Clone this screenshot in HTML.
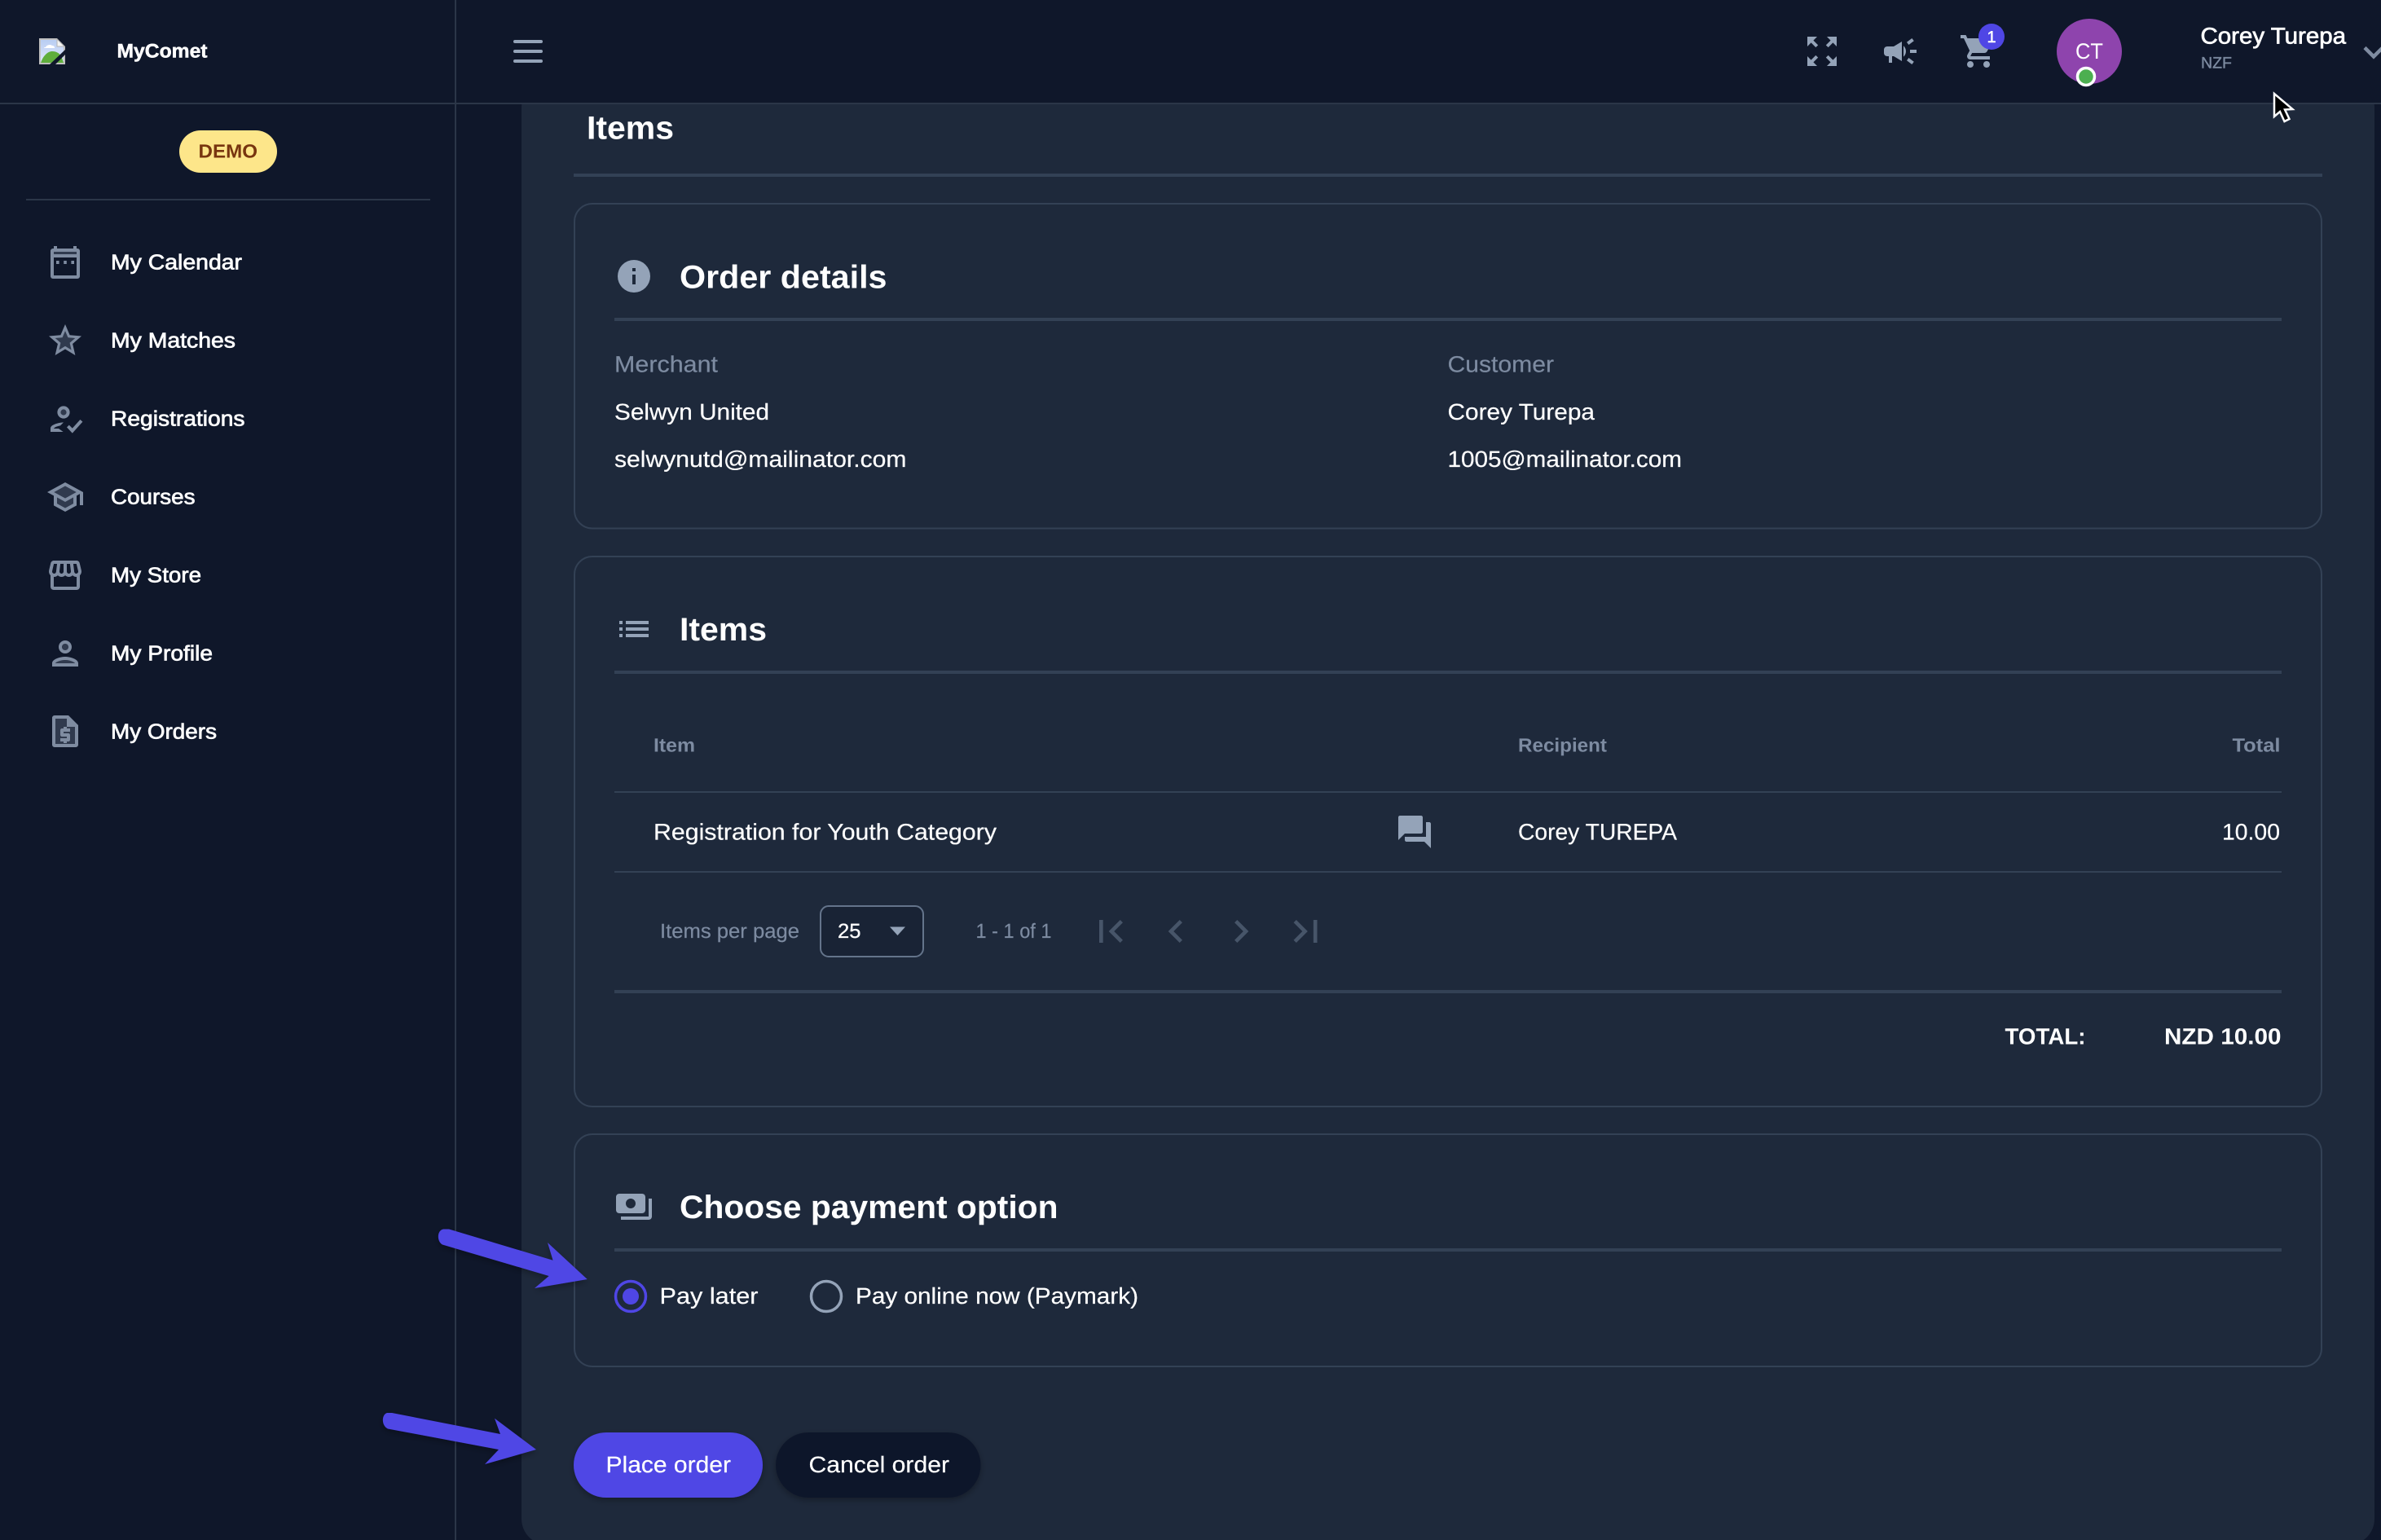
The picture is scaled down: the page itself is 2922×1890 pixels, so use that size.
<!DOCTYPE html>
<html lang="en">
<head>
<meta charset="utf-8">
<title>MyComet - Items</title>
<style>
html,body{margin:0;padding:0;background:#0f172a;width:2922px;height:1890px;overflow:hidden}
svg{display:block}
text{font-family:"Liberation Sans",sans-serif;fill:#fff;text-rendering:geometricPrecision}
.m{stroke:#fff;stroke-width:.5px}
.h{font-size:40px;font-weight:700}
.t{font-size:28px;stroke:#fff;stroke-width:.2px}
.mu{fill:#7d8ba1;stroke:#7d8ba1;stroke-width:.2px}
.n{font-size:26px;stroke:#fff;stroke-width:.7px}
.ic{fill:#7f8ca1}
.ic2{fill:#94a3b8}
.tw{opacity:.3}
.th{font-size:23.5px;font-weight:700;fill:#7d8ba1}
.l{fill:#334155}
.pg{fill:#475569}
</style>
</head>
<body>
<svg xmlns="http://www.w3.org/2000/svg" width="2922" height="1890" viewBox="0 0 2922 1890">
<defs>
<linearGradient id="sky" x1="0" y1="0" x2="0" y2="1"><stop offset="0" stop-color="#b9cdf2"/><stop offset="1" stop-color="#dfe8fb"/></linearGradient>
<filter id="sh" x="-20%" y="-20%" width="140%" height="150%"><feDropShadow dx="0" dy="3" stdDeviation="4" flood-color="#000" flood-opacity=".3"/></filter>
</defs>
<rect width="2922" height="1890" fill="#0f172a"/>
<rect x="640" y="100" width="2274" height="1796" rx="32" fill="#1e293b"/>
<rect x="558" y="0" width="2" height="1890" fill="#2b3648"/>

<!-- header -->
<rect x="0" y="0" width="2922" height="126" fill="#0f172a"/>
<rect x="558" y="0" width="2" height="126" fill="#2b3648"/>
<rect x="0" y="126" width="2922" height="2" fill="#2b3648"/>

<!-- broken image -->
<g>
<path d="M48 47h22l10 10v22H48z" fill="#c0c0c0"/>
<path d="M50 49h19l9 9v19H50z" fill="url(#sky)"/>
<path d="M70 48v9h9z" fill="#f4f4f4" stroke="#b5b5b5"/>
<path d="M56 58c1-3 6-4 8-2 2 0 3 1 3 3H54c0-1 1-1 2-1z" fill="#fff"/>
<path d="M50 77c3-9 9-14 14-14 6 0 10 3 12 8l2 6z" fill="#5fae3c"/>
<path d="M60 80 L80 61 L80 67 L67 80z" fill="#0f172a"/>
</g>
<text x="143.500" y="70.500" class="m" font-weight="700" font-size="24" textLength="111" lengthAdjust="spacingAndGlyphs">MyComet</text>

<!-- hamburger -->
<rect x="630" y="49" width="36" height="4" rx="2" fill="#94a3b8"/>
<rect x="630" y="61" width="36" height="4" rx="2" fill="#94a3b8"/>
<rect x="630" y="73" width="36" height="4" rx="2" fill="#94a3b8"/>

<!-- DEMO -->
<rect x="220" y="160" width="120" height="52" rx="26" fill="#fde68a"/>
<text x="243.500" y="193.500" font-size="23.500" font-weight="700" style="fill:#78350f" textLength="72.500" lengthAdjust="spacingAndGlyphs">DEMO</text>
<rect x="32" y="244" width="496" height="2" fill="#2b3648"/>

<!-- nav -->
<text x="136" y="330.700" class="n" textLength="161" lengthAdjust="spacingAndGlyphs">My Calendar</text>
<text x="136" y="426.700" class="n" textLength="153" lengthAdjust="spacingAndGlyphs">My Matches</text>
<text x="136" y="522.700" class="n" textLength="164.500" lengthAdjust="spacingAndGlyphs">Registrations</text>
<text x="136" y="618.700" class="n" textLength="103.500" lengthAdjust="spacingAndGlyphs">Courses</text>
<text x="136" y="714.700" class="n" textLength="111" lengthAdjust="spacingAndGlyphs">My Store</text>
<text x="136" y="810.700" class="n" textLength="125" lengthAdjust="spacingAndGlyphs">My Profile</text>
<text x="136" y="906.700" class="n" textLength="130" lengthAdjust="spacingAndGlyphs">My Orders</text>

<!-- calendar -->
<g transform="translate(56 298) scale(2)" class="ic">
<rect class="tw" x="4" y="5" width="16" height="3"/>
<path fill-rule="evenodd" d="M5 2h2v1.500h10V2h2v1.500h0.500c.8 0 1.500.7 1.500 1.500v15.500c0 .8-.7 1.500-1.500 1.500h-15c-.8 0-1.500-.7-1.500-1.500V5c0-.8.7-1.500 1.500-1.500H5zM5 9v11h14V9zM5 5.500V7h14V5.500z"/>
<rect x="6.500" y="11" width="1.800" height="2"/><rect x="11.100" y="11" width="1.800" height="2"/><rect x="15.700" y="11" width="1.800" height="2"/>
</g>
<!-- star -->
<g transform="translate(56 394) scale(2)" class="ic">
<path class="tw" d="M12 15.400l-3.760 2.270 1-4.280-3.320-2.880 4.380-.38L12 6.100l1.710 4.040 4.380.38-3.320 2.880 1 4.280z"/>
<path d="M22 9.240l-7.190-.62L12 2 9.190 8.630 2 9.240l5.460 4.730L5.820 21 12 17.270 18.180 21l-1.630-7.030L22 9.240zM12 15.400l-3.760 2.270 1-4.280-3.320-2.880 4.380-.38L12 6.100l1.710 4.040 4.380.38-3.320 2.880 1 4.280z"/>
</g>
<!-- how to reg -->
<g transform="translate(56 490) scale(2)" class="ic">
<circle cx="11" cy="8" r="2" class="tw"/>
<path fill-rule="evenodd" d="M11 4.200a3.800 3.800 0 1 1 0 7.600 3.800 3.800 0 0 1 0-7.600zm0 2a1.800 1.800 0 1 0 0 3.600 1.800 1.800 0 0 0 0-3.600z"/>
<path d="M3 20v-2.200c0-1.900 4-3.400 8-3.600l-2 2c-1.800.3-3.600 1-4 1.800h3l2.800 2z"/>
<path d="M13 17.200l1.400-1.400 2 2 4.800-5.300 1.500 1.300-6.300 7z"/>
</g>
<!-- school -->
<g transform="translate(56 586) scale(2)" class="ic">
<path class="tw" d="M7 12.270v3.720l5 2.730 5-2.730v-3.720L12 15zM5.180 9L12 12.720 18.820 9 12 5.280z"/>
<path d="M12 3L1 9l4 2.180v6L12 21l7-3.820v-6l2-1.090V17h2V9L12 3zm6.820 6L12 12.720 5.180 9 12 5.280 18.820 9zM17 15.990l-5 2.730-5-2.730v-3.720L12 15l5-2.730v3.720z"/>
</g>
<!-- store -->
<g transform="translate(56 682) scale(2)" class="ic">
<path d="M21.900 8.890l-1.050-4.370c-.22-.9-1-1.520-1.910-1.520H5.050c-.9 0-1.690.63-1.900 1.520L2.100 8.890c-.24 1.020-.02 2.060.62 2.880.08.11.19.19.28.29V19c0 1.100.9 2 2 2h14c1.100 0 2-.9 2-2v-6.940c.09-.09.2-.18.28-.28.64-.82.87-1.870.62-2.890zm-2.990-3.900l1.050 4.370c.1.42.01.84-.25 1.170-.14.18-.44.47-.94.47-.61 0-1.140-.49-1.210-1.140L16.980 5l1.930-.01zM13 5h1.960l.54 4.520c.05.39-.07.78-.33 1.070-.22.26-.54.41-.95.41-.67 0-1.220-.59-1.220-1.310V5zM8.490 9.520L9.040 5H11v4.690c0 .72-.55 1.310-1.290 1.310-.34 0-.65-.15-.89-.41-.25-.29-.37-.68-.33-1.070zm-4.450-.16L5.050 5h1.970l-.58 4.860c-.08.65-.6 1.140-1.210 1.140-.49 0-.8-.29-.93-.47-.27-.32-.36-.75-.26-1.170zM5 19v-6.030c.08.01.15.03.23.03.87 0 1.660-.36 2.240-.95.6.6 1.400.95 2.310.95.87 0 1.650-.36 2.230-.93.59.57 1.390.93 2.290.93.84 0 1.640-.35 2.240-.95.58.59 1.370.95 2.240.95.08 0 .15-.02.23-.03V19H5z"/>
</g>
<!-- person -->
<g transform="translate(56 778) scale(2)" class="ic">
<path class="tw" d="M12 16c-2.690 0-5.770 1.280-6 2h12c-.2-.71-3.300-2-6-2z"/><circle class="tw" cx="12" cy="8" r="2"/>
<path d="M12 6c1.100 0 2 .9 2 2s-.9 2-2 2-2-.9-2-2 .9-2 2-2m0 10c2.700 0 5.800 1.290 6 2H6c.23-.72 3.310-2 6-2m0-12C9.790 4 8 5.790 8 8s1.790 4 4 4 4-1.790 4-4-1.790-4-4-4zm0 10c-2.670 0-8 1.340-8 4v2h16v-2c0-2.660-5.330-4-8-4z"/>
</g>
<!-- request quote -->
<g transform="translate(56 874) scale(2)" class="ic">
<path class="tw" d="M5 3.500h8.500v5h5V20H5z"/>
<path fill-rule="evenodd" d="M14 2H5.500C4.700 2 4 2.700 4 3.500V20c0 .8.7 1.500 1.500 1.500h13c.8 0 1.500-.7 1.500-1.500V8zM6 19.500V4h7v5h5v10.500z"/>
<path d="M11 19h2v-1h1c.55 0 1-.45 1-1v-3c0-.55-.45-1-1-1h-3v-1h4v-2h-2V9h-2v1h-1c-.55 0-1 .45-1 1v3c0 .55.45 1 1 1h3v1H9v2h2z"/>
</g>

<!-- top right icons -->
<g transform="translate(2212 39) scale(2)" class="ic2"><path d="M15 3l2.300 2.300-2.890 2.870 1.420 1.420L18.700 6.700 21 9V3zM3 9l2.300-2.300 2.870 2.890 1.420-1.420L6.700 5.300 9 3H3zm6 12l-2.300-2.300 2.890-2.870-1.420-1.420L5.300 17.300 3 15v6zm12-6l-2.300 2.300-2.870-2.890-1.420 1.420 2.890 2.870L15 21h6z"/></g>
<g transform="translate(2308 39) scale(2)" class="ic2"><path d="M18 11v2h4v-2h-4zm-2 6.610c.96.71 2.210 1.650 3.200 2.390.4-.53.8-1.070 1.200-1.600-.99-.74-2.240-1.680-3.200-2.400-.4.54-.8 1.080-1.200 1.610zM20.400 5.600c-.4-.53-.8-1.070-1.200-1.600-.99.74-2.240 1.680-3.200 2.400.4.53.8 1.070 1.200 1.600.96-.72 2.210-1.650 3.200-2.400zM4 9c-1.100 0-2 .9-2 2v2c0 1.100.9 2 2 2h1v4h2v-4h1l5 3V6L8 9H4zm11.500 3c0-1.330-.58-2.530-1.500-3.350v6.690c.92-.81 1.500-2.010 1.500-3.340z"/></g>
<g transform="translate(2404 39) scale(2)" class="ic2"><path d="M7 18c-1.100 0-1.990.9-1.990 2S5.900 22 7 22s2-.9 2-2-.9-2-2-2zM1 2v2h2l3.600 7.590-1.350 2.450c-.16.28-.25.61-.25.96 0 1.100.9 2 2 2h12v-2H7.420c-.14 0-.25-.11-.25-.25l.03-.12.9-1.630h7.450c.75 0 1.410-.41 1.750-1.030l3.580-6.490c.08-.14.12-.31.12-.48 0-.55-.45-1-1-1H5.210l-.94-2H1zm16 16c-1.100 0-1.990.9-1.990 2s.89 2 1.990 2 2-.9 2-2-.9-2-2-2z"/></g>
<circle cx="2444" cy="45" r="16" fill="#4f46e5"/>
<text x="2444" y="52" font-size="20" text-anchor="middle" class="m">1</text>
<circle cx="2564" cy="63" r="40" fill="#8e44ad"/>
<text x="2547" y="72" font-size="27" textLength="34" lengthAdjust="spacingAndGlyphs">CT</text>
<circle cx="2560" cy="94" r="10.500" fill="#4caf50" stroke="#fff" stroke-width="3.500"/>
<text x="2700.500" y="53.500" font-size="28" style="stroke:#fff;stroke-width:.7px" textLength="178.500" lengthAdjust="spacingAndGlyphs">Corey Turepa</text>
<text x="2701" y="83.300" font-size="19.500" style="fill:#7d8ba1;stroke:#7d8ba1;stroke-width:.4px" textLength="38" lengthAdjust="spacingAndGlyphs">NZF</text>
<path d="M2902 58.500l11 11 11-11" fill="none" stroke="#7f8ca1" stroke-width="4.500"/>
<!-- cursor -->
<path d="M2791 115v28l7-6 5.500 12 6-3-5.500-11.500 9.500-.5z" fill="#000" stroke="#fff" stroke-width="2.500" stroke-linejoin="miter"/>

<!-- page title -->
<text x="720" y="170.700" class="h" textLength="107" lengthAdjust="spacingAndGlyphs">Items</text>
<rect x="704" y="213" width="2146" height="4" class="l"/>

<!-- card 1 -->
<rect x="705" y="250" width="2144" height="398.500" rx="22" fill="none" stroke="#334155" stroke-width="2"/>
<circle cx="778" cy="339" r="20" fill="#94a3b8"/>
<rect x="776" y="337" width="4" height="12" fill="#1e293b"/><rect x="776" y="329" width="4" height="4" fill="#1e293b"/>
<text x="834" y="353.500" class="h" textLength="254.500" lengthAdjust="spacingAndGlyphs">Order details</text>
<rect x="754" y="390" width="2046" height="4" class="l"/>
<text x="754" y="456.700" class="t mu" textLength="127" lengthAdjust="spacingAndGlyphs">Merchant</text>
<text x="754" y="515" class="t" textLength="190" lengthAdjust="spacingAndGlyphs">Selwyn United</text>
<text x="754" y="573" class="t" textLength="358.500" lengthAdjust="spacingAndGlyphs">selwynutd@mailinator.com</text>
<text x="1776.500" y="456.700" class="t mu" textLength="130.500" lengthAdjust="spacingAndGlyphs">Customer</text>
<text x="1776.500" y="515" class="t" textLength="180.500" lengthAdjust="spacingAndGlyphs">Corey Turepa</text>
<text x="1776.500" y="573" class="t" textLength="287.500" lengthAdjust="spacingAndGlyphs">1005@mailinator.com</text>

<!-- card 2 -->
<rect x="705" y="683" width="2144" height="675" rx="22" fill="none" stroke="#334155" stroke-width="2"/>
<g transform="translate(754 748) scale(2)" class="ic2"><path d="M3 13h2v-2H3v2zm0 4h2v-2H3v2zm0-8h2V7H3v2zm4 4h14v-2H7v2zm0 4h14v-2H7v2zM7 7v2h14V7H7z"/></g>
<text x="834" y="786" class="h" textLength="107" lengthAdjust="spacingAndGlyphs">Items</text>
<rect x="754" y="823" width="2046" height="4" class="l"/>
<text x="802" y="922.500" class="th" textLength="51" lengthAdjust="spacingAndGlyphs">Item</text>
<text x="1863" y="922.500" class="th" textLength="109" lengthAdjust="spacingAndGlyphs">Recipient</text>
<text x="2739.500" y="922.500" class="th" textLength="59" lengthAdjust="spacingAndGlyphs">Total</text>
<rect x="754" y="971" width="2046" height="2" class="l"/>
<text x="802" y="1030.700" class="t" textLength="421" lengthAdjust="spacingAndGlyphs">Registration for Youth Category</text>
<g transform="translate(1712 997) scale(2)" class="ic2"><path d="M21 6h-2v9H6v2c0 .55.45 1 1 1h11l4 4V7c0-.55-.45-1-1-1zm-4 6V3c0-.55-.45-1-1-1H3c-.55 0-1 .45-1 1v14l4-4h10c.55 0 1-.45 1-1z"/></g>
<text x="1863" y="1030.700" class="t" textLength="195" lengthAdjust="spacingAndGlyphs">Corey TUREPA</text>
<text x="2727" y="1030.700" class="t" textLength="71" lengthAdjust="spacingAndGlyphs">10.00</text>
<rect x="754" y="1069" width="2046" height="2" class="l"/>

<text x="810" y="1151" font-size="25" class="mu" textLength="171" lengthAdjust="spacingAndGlyphs">Items per page</text>
<rect x="1007" y="1112" width="126" height="62" rx="10" fill="#192335" stroke="#64748b" stroke-width="2"/>
<text x="1028" y="1151" font-size="25" style="stroke:#fff;stroke-width:.3px" textLength="28.500" lengthAdjust="spacingAndGlyphs">25</text>
<path d="M1092 1137.500h19l-9.500 10.500z" fill="#94a3b8"/>
<text x="1197.500" y="1151" font-size="25" class="mu" textLength="93" lengthAdjust="spacingAndGlyphs">1 - 1 of 1</text>
<g transform="translate(1335 1115) scale(2.333)" class="pg"><path d="M18.410 16.590L13.820 12l4.590-4.590L17 6l-6 6 6 6zM6 6h2v12H6z"/></g>
<g transform="translate(1415 1115) scale(2.333)" class="pg"><path d="M15.410 7.410L14 6l-6 6 6 6 1.410-1.410L10.830 12z"/></g>
<g transform="translate(1495 1115) scale(2.333)" class="pg"><path d="M10 6L8.590 7.410 13.170 12l-4.580 4.590L10 18l6-6z"/></g>
<g transform="translate(1574.500 1115) scale(2.333)" class="pg"><path d="M5.590 7.410L10.180 12l-4.590 4.590L7 18l6-6-6-6zM16 6h2v12h-2z"/></g>
<rect x="754" y="1215" width="2046" height="4" class="l"/>
<text x="2460.500" y="1281.700" font-size="28" font-weight="700" textLength="99" lengthAdjust="spacingAndGlyphs">TOTAL:</text>
<text x="2656" y="1281.700" font-size="28" font-weight="700" textLength="143.500" lengthAdjust="spacingAndGlyphs">NZD 10.00</text>

<!-- card 3 -->
<rect x="705" y="1392" width="2144" height="285" rx="22" fill="none" stroke="#334155" stroke-width="2"/>
<g transform="translate(754 1457) scale(2)" class="ic2"><path d="M19 14V6c0-1.100-.9-2-2-2H3c-1.100 0-2 .9-2 2v8c0 1.100.9 2 2 2h14c1.100 0 2-.9 2-2zm-9-1c-1.660 0-3-1.340-3-3s1.340-3 3-3 3 1.340 3 3-1.340 3-3 3zm13-6v11c0 1.100-.9 2-2 2H4v-2h17V7h2z"/></g>
<text x="834" y="1495" class="h" textLength="464.500" lengthAdjust="spacingAndGlyphs">Choose payment option</text>
<rect x="754" y="1532" width="2046" height="4" class="l"/>
<circle cx="774" cy="1591" r="18.500" fill="none" stroke="#4f46e5" stroke-width="3.500"/>
<circle cx="774" cy="1591" r="10" fill="#4f46e5"/>
<text x="809.500" y="1600" class="t" textLength="121" lengthAdjust="spacingAndGlyphs">Pay later</text>
<circle cx="1014" cy="1591" r="18.500" fill="none" stroke="#94a3b8" stroke-width="3.500"/>
<text x="1050" y="1600" class="t" textLength="347" lengthAdjust="spacingAndGlyphs">Pay online now (Paymark)</text>

<!-- buttons -->
<rect x="704" y="1758" width="232" height="80" rx="40" fill="#4f46e5" filter="url(#sh)"/>
<text x="743.500" y="1807" class="t m" textLength="153.500" lengthAdjust="spacingAndGlyphs">Place order</text>
<rect x="952" y="1758" width="251.500" height="80" rx="40" fill="#0f172a" filter="url(#sh)"/>
<text x="992.500" y="1807" class="t m" textLength="172.500" lengthAdjust="spacingAndGlyphs">Cancel order</text>

<!-- arrows -->
<path d="M551 1508.500L678.600 1546.700 672 1525 720.700 1570 656 1581 673.700 1566 543 1527.500C536 1524 536 1510 544 1508.500z" fill="#4f46e5" filter="url(#sh)"/>
<path d="M481 1734L614 1760 607 1740.700 658 1779 595 1797 612 1779 476 1753.500C468 1750 468 1736 475 1734z" fill="#4f46e5" filter="url(#sh)"/>
</svg>
</body>
</html>
